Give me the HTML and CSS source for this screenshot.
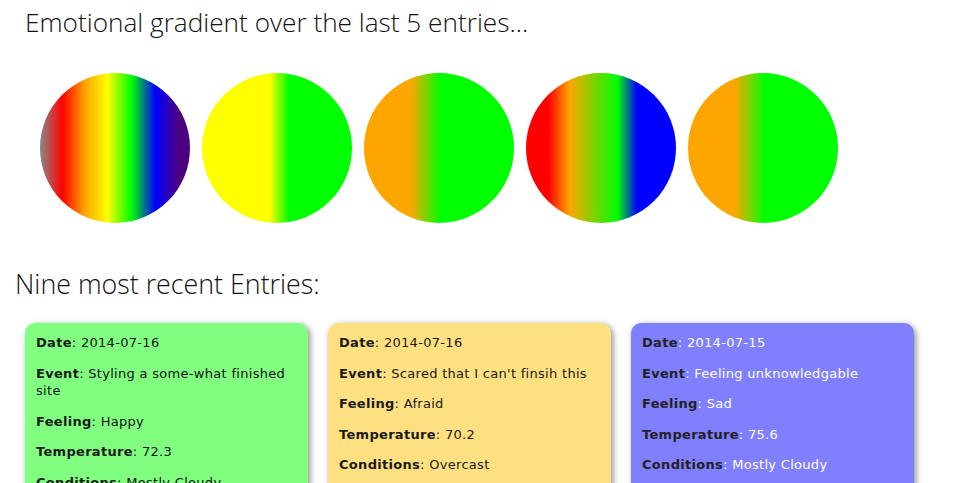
FILE: index.html
```html
<!DOCTYPE html>
<html>
<head>
<meta charset="utf-8">
<title>Emotional journal</title>
<link rel="stylesheet" href="styles.css">
</head>
<body>
  <h1 class="title">Emotional gradient over the last 5 entries...</h1>
  <div class="orbs">
    <div class="orb orb-rainbow"></div>
    <div class="orb orb-yellow-green"></div>
    <div class="orb orb-orange-green"></div>
    <div class="orb orb-red-blue"></div>
    <div class="orb orb-orange-green"></div>
  </div>
  <h2 class="subtitle">Nine most recent Entries:</h2>
  <div class="cards">
    <div class="card card-happy">
      <p><b>Date</b>: 2014-07-16</p>
      <p><b>Event</b>: Styling a some-what finished site</p>
      <p><b>Feeling</b>: Happy</p>
      <p><b>Temperature</b>: 72.3</p>
      <p><b>Conditions</b>: Mostly Cloudy</p>
    </div>
    <div class="card card-afraid">
      <p><b>Date</b>: 2014-07-16</p>
      <p><b>Event</b>: Scared that I can't finsih this</p>
      <p><b>Feeling</b>: Afraid</p>
      <p><b>Temperature</b>: 70.2</p>
      <p><b>Conditions</b>: Overcast</p>
    </div>
    <div class="card card-sad">
      <p><b>Date</b>: 2014-07-15</p>
      <p><b>Event</b>: Feeling unknowledgable</p>
      <p><b>Feeling</b>: Sad</p>
      <p><b>Temperature</b>: 75.6</p>
      <p><b>Conditions</b>: Mostly Cloudy</p>
    </div>
  </div>
</body>
</html>
```
FILE: styles.css
```css
html, body {
  margin: 0;
  padding: 0;
  background: #ffffff;
}

body {
  font-family: "Open Sans", "Noto Sans", sans-serif;
  color: #111111;
  overflow: hidden;
}

.title {
  margin: 6px 0 0 25px;
  font-size: 26.2px;
  line-height: 32px;
  font-weight: 300;
  color: #111111;
}

.orbs {
  display: flex;
  gap: 12px;
  margin: 35px 0 0 40px;
}

.orb {
  width: 150px;
  height: 150px;
  border-radius: 50%;
  flex: none;
}

.orb-rainbow {
  background: linear-gradient(to right, #888888 0%, #ff0000 15%, #ffa500 30%, #ffff00 45%, #00ff00 61%, #0000ff 77%, #4b0082 92%, #4b0082 100%);
}

.orb-yellow-green {
  background: linear-gradient(to right, #ffff00 45%, #00ff00 58%);
}

.orb-orange-green {
  background: linear-gradient(to right, #ffa500 31%, #00ff00 51%);
}

.orb-red-blue {
  background: linear-gradient(to right, #ff0000 15%, #ffa500 29%, #00ff00 61%, #0000ff 74%);
}

.subtitle {
  margin: 45px 0 0 15px;
  font-size: 26.8px;
  line-height: 32px;
  font-weight: 300;
  color: #111111;
}

.cards {
  display: flex;
  align-items: flex-start;
  gap: 20px;
  margin: 23px 0 0 25px;
}

.card {
  width: 261px;
  flex: none;
  padding: 11px 11px 10px;
  border-radius: 10px;
  box-shadow: 2px 2px 6px rgba(0, 0, 0, 0.45);
  font-family: "DejaVu Sans", Verdana, sans-serif;
  font-size: 13px;
  line-height: 17.5px;
  letter-spacing: 0.3px;
}

.card p {
  margin: 0 0 13px 0;
}

.card b {
  font-weight: bold;
  color: #1a1a1a;
}

.card-happy {
  background: #80ff80;
  color: #111111;
}

.card-afraid {
  background: #ffe080;
  color: #1a1a1a;
}

.card-sad {
  background: #8080ff;
  color: #ffffff;
}

.card-sad b {
  color: #222222;
}
```
